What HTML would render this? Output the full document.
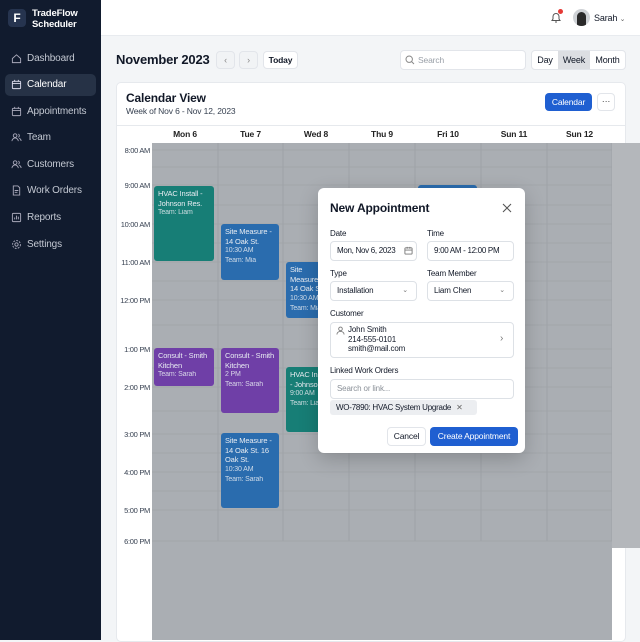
<!DOCTYPE html>
<html><head><meta charset="utf-8"><style>
*{box-sizing:border-box;margin:0;padding:0}
body{width:640px;height:640px;overflow:hidden;font-family:"Liberation Sans",sans-serif;background:#f3f5f7;position:relative;color:#111827;letter-spacing:-0.15px}
.a{position:absolute;white-space:nowrap}
.side{left:0;top:0;width:101px;height:640px;background:#111b2e}
.nav{left:5px;width:91px;height:22px;border-radius:5px;color:#c3c8d2;font-size:10px;line-height:22px;padding-left:22px}
.nav svg{position:absolute;left:6px;top:5px}
.btn{background:#fff;border:1px solid #e2e5ea;border-radius:4px;font-size:9px;text-align:center}
.ev{border-radius:3px;color:#e8ecf2;font-size:7.5px;line-height:9.5px;padding:3px 4px;overflow:hidden;white-space:normal}
.ev small{font-size:7px;opacity:.85;display:block;line-height:10px}
.tl{left:114px;width:36px;text-align:right;font-size:7.5px;color:#374151;letter-spacing:-0.3px}
.inp{border:1px solid #dde1e6;border-radius:4px;background:#fff;font-size:8px;padding-left:6px;line-height:18px;height:20px}
.lbl{font-size:8px;color:#111827}
</style></head><body>
<div class="a side"></div>
<div class="a" style="left:8px;top:9px;width:18px;height:18px;border-radius:4px;background:#26344f;color:#fff;font-weight:bold;font-size:12px;text-align:center;line-height:18px">F</div>
<div class="a" style="left:32px;top:8px;color:#fff;font-size:9.5px;font-weight:bold;line-height:11px">TradeFlow<br>Scheduler</div>
<div class="a nav" style="top:48px"><svg width="11" height="11" viewBox="0 0 12 12" fill="none" stroke="#aab" stroke-width="1"><path d="M1.5 6L6 2l4.5 4v4.5h-9z"/></svg>Dashboard</div>
<div class="a nav" style="top:74px;background:#263246;color:#fff"><svg width="11" height="11" viewBox="0 0 12 12" fill="none" stroke="#dde" stroke-width="1"><rect x="1.5" y="2.5" width="9" height="8" rx="1"/><path d="M1.5 5h9M4 1v2M8 1v2"/></svg>Calendar</div>
<div class="a nav" style="top:101px"><svg width="11" height="11" viewBox="0 0 12 12" fill="none" stroke="#aab" stroke-width="1"><rect x="1.5" y="2.5" width="9" height="8" rx="1"/><path d="M1.5 5h9M4 1v2M8 1v2"/></svg>Appointments</div>
<div class="a nav" style="top:127px"><svg width="11" height="11" viewBox="0 0 12 12" fill="none" stroke="#aab" stroke-width="1"><circle cx="4.5" cy="4" r="2"/><path d="M1 10c0-2 2-3.5 3.5-3.5S8 8 8 10M8 2.2a2 2 0 010 3.6M9 6.8c1 .5 2 1.5 2 3"/></svg>Team</div>
<div class="a nav" style="top:154px"><svg width="11" height="11" viewBox="0 0 12 12" fill="none" stroke="#aab" stroke-width="1"><circle cx="4.5" cy="4" r="2"/><path d="M1 10c0-2 2-3.5 3.5-3.5S8 8 8 10M8 2.2a2 2 0 010 3.6M9 6.8c1 .5 2 1.5 2 3"/></svg>Customers</div>
<div class="a nav" style="top:180px"><svg width="11" height="11" viewBox="0 0 12 12" fill="none" stroke="#aab" stroke-width="1"><path d="M2.5 1h5l2 2v8h-7z"/><path d="M4 6h4M4 8h3"/></svg>Work Orders</div>
<div class="a nav" style="top:207px"><svg width="11" height="11" viewBox="0 0 12 12" fill="none" stroke="#aab" stroke-width="1"><rect x="1.5" y="1.5" width="9" height="9" rx="1"/><path d="M4 8V6M6 8V4M8 8V5"/></svg>Reports</div>
<div class="a nav" style="top:234px"><svg width="11" height="11" viewBox="0 0 12 12" fill="none" stroke="#aab" stroke-width="1"><circle cx="6" cy="6" r="1.8"/><circle cx="6" cy="6" r="4.3" stroke-dasharray="2 1.3"/></svg>Settings</div>

<div class="a" style="left:101px;top:0;width:539px;height:36px;background:#fff;border-bottom:1px solid #e8ebef"></div>
<svg class="a" style="left:550px;top:11px" width="12" height="13" viewBox="0 0 12 13" fill="none" stroke="#555" stroke-width="1"><path d="M2 9.5h8L9 8V5.5a3 3 0 00-6 0V8z M5 11h2"/></svg>
<div class="a" style="left:558px;top:9px;width:5px;height:5px;border-radius:50%;background:#e53935"></div>
<div class="a" style="left:573px;top:9px;width:17px;height:17px;border-radius:50%;background:#cfd2d6;overflow:hidden"><div style="margin:3px auto;width:9px;height:14px;border-radius:5px 5px 0 0;background:#2a2a2a"></div></div>
<div class="a" style="left:594px;top:13px;font-size:9px">Sarah <span style="color:#666;font-size:7px">&#8964;</span></div>

<div class="a" style="left:116px;top:52px;font-size:13px;font-weight:bold;letter-spacing:-0.2px">November 2023</div>
<div class="a btn" style="left:216px;top:51px;width:19px;height:18px;line-height:16px;color:#888;background:#f1f3f5">&lsaquo;</div>
<div class="a btn" style="left:239px;top:51px;width:19px;height:18px;line-height:16px;color:#888;background:#f1f3f5">&rsaquo;</div>
<div class="a btn" style="left:263px;top:51px;width:35px;height:18px;line-height:16px;font-weight:bold;font-size:8.5px">Today</div>
<div class="a btn" style="left:400px;top:50px;width:126px;height:20px;text-align:left;padding-left:17px;line-height:18px;color:#9aa0a8;font-size:8.5px">Search</div>
<svg class="a" style="left:405px;top:55px" width="10" height="10" viewBox="0 0 10 10" fill="none" stroke="#888" stroke-width="1"><circle cx="4.2" cy="4.2" r="3.2"/><path d="M6.5 6.5L9 9"/></svg>
<div class="a btn" style="left:531px;top:50px;width:95px;height:20px;display:flex;line-height:18px;overflow:hidden"><span style="width:26px">Day</span><span style="width:32px;background:#dcdee2">Week</span><span style="flex:1">Month</span></div>

<div class="a" style="left:116px;top:82px;width:510px;height:560px;background:#fff;border:1px solid #e6e9ed;border-radius:5px"></div>
<div class="a" style="left:126px;top:91px;font-size:12px;font-weight:bold">Calendar View</div>
<div class="a" style="left:126px;top:106px;font-size:8.5px;color:#374151">Week of Nov 6 - Nov 12, 2023</div>
<div class="a" style="left:545px;top:93px;width:47px;height:18px;border-radius:4px;background:#1f5fd1;color:#fff;font-size:8.5px;text-align:center;line-height:18px">Calendar</div>
<div class="a btn" style="left:597px;top:93px;width:18px;height:18px;line-height:14px;color:#444">&middot;&middot;&middot;</div>
<div class="a" style="left:116px;top:125px;width:510px;border-top:1px solid #e6e9ed"></div>
<div class="a" style="left:152px;top:129px;width:460px;display:flex;font-size:8.5px;font-weight:bold;color:#222">
<span style="width:66px;text-align:center">Mon 6</span><span style="width:65px;text-align:center">Tue 7</span><span style="width:66px;text-align:center">Wed 8</span><span style="width:66px;text-align:center">Thu 9</span><span style="width:66px;text-align:center">Fri 10</span><span style="width:66px;text-align:center">Sun 11</span><span style="width:65px;text-align:center">Sun 12</span></div>

<div class="a" style="left:612px;top:143px;width:28px;height:405px;background:#b4b7bb"></div>
<div class="a" style="left:152px;top:143px;width:460px;height:497px;background:#aaaeb3"></div>
<svg class="a" style="left:152px;top:143px" width="460" height="400">
<g stroke="#9ea2a7" stroke-width="1">
<path d="M66 0V398M131 0V398M197 0V398M263 0V398M329 0V398M395 0V398M460 0V398"/>
<path d="M0 7H460M0 24H460M0 42H460M0 62H460M0 81H460M0 100H460M0 119H460M0 138H460M0 157H460M0 182H460M0 206H460M0 225H460M0 244H460M0 268H460M0 291H460M0 310H460M0 329H460M0 348H460M0 367H460M0 398H460" stroke-opacity=".7"/>
</g></svg>
<div class="a tl" style="top:146px">8:00 AM</div>
<div class="a tl" style="top:181px">9:00 AM</div>
<div class="a tl" style="top:220px">10:00 AM</div>
<div class="a tl" style="top:258px">11:00 AM</div>
<div class="a tl" style="top:296px">12:00 PM</div>
<div class="a tl" style="top:345px">1:00 PM</div>
<div class="a tl" style="top:383px">2:00 PM</div>
<div class="a tl" style="top:430px">3:00 PM</div>
<div class="a tl" style="top:468px">4:00 PM</div>
<div class="a tl" style="top:506px">5:00 PM</div>
<div class="a tl" style="top:537px">6:00 PM</div>

<div class="a ev" style="left:154px;top:186px;width:60px;height:75px;background:#177e76">HVAC Install - Johnson Res.<small>Team: Liam</small></div>
<div class="a ev" style="left:221px;top:224px;width:58px;height:56px;background:#2a6cae">Site Measure - 14 Oak St.<small>10:30 AM</small><small>Team: Mia</small></div>
<div class="a ev" style="left:286px;top:262px;width:50px;height:56px;background:#2a6cae">Site Measure - 14 Oak St.<small>10:30 AM</small><small>Team: Mia</small></div>
<div class="a ev" style="left:154px;top:348px;width:60px;height:38px;background:#6f3fa7">Consult - Smith Kitchen<small>Team: Sarah</small></div>
<div class="a ev" style="left:221px;top:348px;width:58px;height:65px;background:#6f3fa7">Consult - Smith Kitchen<small>2 PM</small><small>Team: Sarah</small></div>
<div class="a ev" style="left:286px;top:367px;width:50px;height:65px;background:#177e76">HVAC Install - Johnson<small>9:00 AM</small><small>Team: Liam</small></div>
<div class="a ev" style="left:221px;top:433px;width:58px;height:75px;background:#2a6cae">Site Measure - 14 Oak St. 16 Oak St.<small>10:30 AM</small><small>Team: Sarah</small></div>
<div class="a ev" style="left:418px;top:185px;width:59px;height:20px;background:#2a6cae"></div>

<div class="a" style="left:318px;top:188px;width:207px;height:265px;background:#fff;border-radius:6px;box-shadow:0 6px 20px rgba(0,0,0,.2)"></div>
<div class="a" style="left:330px;top:201px;font-size:12px;font-weight:bold">New Appointment</div>
<svg class="a" style="left:502px;top:203px" width="10" height="10" viewBox="0 0 10 10" stroke="#555" stroke-width="1.1"><path d="M1 1l8 8M9 1L1 9"/></svg>
<div class="a lbl" style="left:330px;top:229px">Date</div>
<div class="a lbl" style="left:427px;top:229px">Time</div>
<div class="a inp" style="left:330px;top:241px;width:87px;letter-spacing:-0.3px">Mon, Nov 6, 2023</div>
<svg class="a" style="left:404px;top:246px" width="9" height="9" viewBox="0 0 10 10" fill="none" stroke="#777" stroke-width="1"><rect x="1" y="2" width="8" height="7" rx="1"/><path d="M1 4.5h8M3.5 1v2M6.5 1v2"/></svg>
<div class="a inp" style="left:427px;top:241px;width:87px;letter-spacing:-0.3px">9:00 AM - 12:00 PM</div>
<div class="a lbl" style="left:330px;top:269px">Type</div>
<div class="a lbl" style="left:427px;top:269px">Team Member</div>
<div class="a inp" style="left:330px;top:281px;width:87px">Installation<span style="position:absolute;right:8px;color:#777;font-size:7px">&#8964;</span></div>
<div class="a inp" style="left:427px;top:281px;width:87px">Liam Chen<span style="position:absolute;right:8px;color:#777;font-size:7px">&#8964;</span></div>
<div class="a lbl" style="left:330px;top:309px">Customer</div>
<div class="a" style="left:330px;top:322px;width:184px;height:36px;border:1px solid #dde1e6;border-radius:4px"></div>
<svg class="a" style="left:336px;top:326px" width="9" height="9" viewBox="0 0 10 10" fill="none" stroke="#777" stroke-width="1"><circle cx="5" cy="3.2" r="2"/><path d="M1 9.5c0-2.3 2-3.5 4-3.5s4 1.2 4 3.5"/></svg>
<div class="a" style="left:348px;top:325px;font-size:8px;line-height:9.5px">John Smith<br>214-555-0101<br>smith@mail.com</div>
<div class="a" style="left:500px;top:333px;font-size:10px;color:#777">&rsaquo;</div>
<div class="a lbl" style="left:330px;top:366px">Linked Work Orders</div>
<div class="a inp" style="left:330px;top:379px;width:184px;color:#8a9098">Search or link...</div>
<div class="a" style="left:330px;top:400px;width:147px;height:15px;background:#eceef1;border-radius:3px;font-size:8px;line-height:15px;padding-left:6px;letter-spacing:-0.25px">WO-7890: HVAC System Upgrade <span style="color:#666;margin-left:3px">&#x2715;</span></div>
<div class="a btn" style="left:387px;top:427px;width:39px;height:19px;line-height:17px;font-size:8.5px">Cancel</div>
<div class="a" style="left:430px;top:427px;width:88px;height:19px;border-radius:4px;background:#1f5fd1;color:#fff;font-size:8.5px;text-align:center;line-height:19px">Create Appointment</div>
</body></html>
